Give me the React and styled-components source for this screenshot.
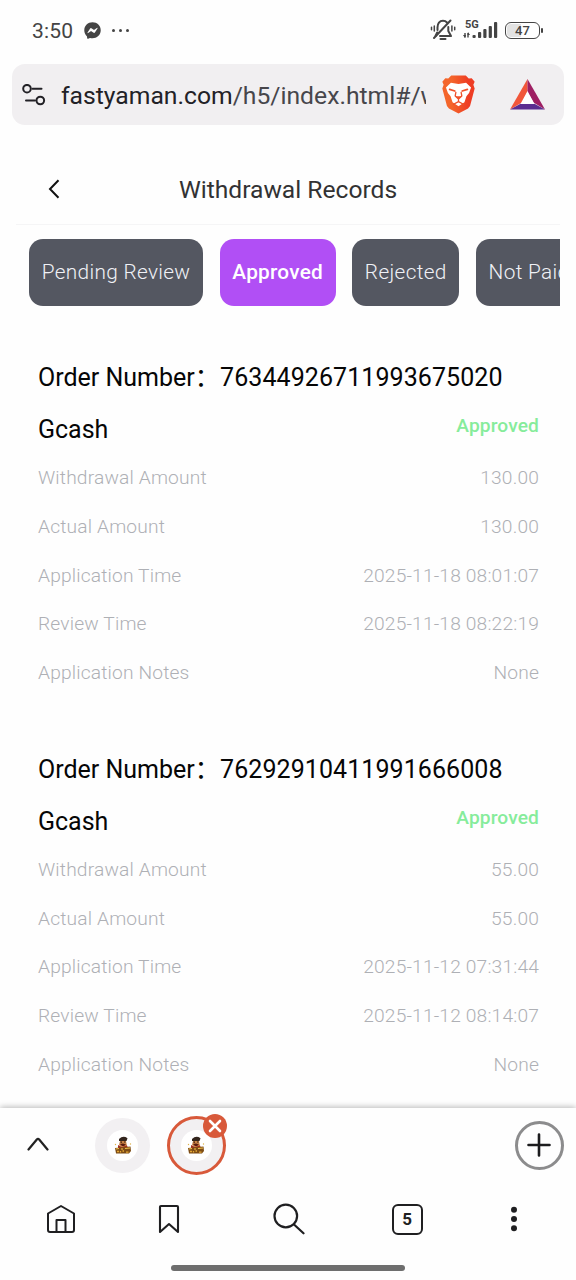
import React from 'react';
import styled, { createGlobalStyle } from 'styled-components';
import { FaFacebookMessenger } from 'react-icons/fa';

const GlobalStyle = createGlobalStyle`
    *{
        box-sizing:border-box;
    }
    body{
        margin:0;
        background:#fefefe;
        font-family:Roboto, "Noto Sans CJK SC", sans-serif;
    }
    button{
        padding:0;
        border:0;
        background:none;
        font:inherit;
    }
    svg{
        display:block;
    }
`;

const tabs = ['Pending Review', 'Approved', 'Rejected', 'Not Paid'];

const orders = [
    {
        number: '76344926711993675020',
        channel: 'Gcash',
        status: 'Approved',
        rows: [
            ['Withdrawal Amount', '130.00'],
            ['Actual Amount', '130.00'],
            ['Application Time', '2025-11-18 08:01:07'],
            ['Review Time', '2025-11-18 08:22:19'],
            ['Application Notes', 'None'],
        ],
    },
    {
        number: '76292910411991666008',
        channel: 'Gcash',
        status: 'Approved',
        rows: [
            ['Withdrawal Amount', '55.00'],
            ['Actual Amount', '55.00'],
            ['Application Time', '2025-11-12 07:31:44'],
            ['Review Time', '2025-11-12 08:14:07'],
            ['Application Notes', 'None'],
        ],
    },
];

function MuteIcon() {
    return (
        <svg width="26" height="24" viewBox="0 0 26 24" fill="none" stroke="#444" strokeWidth="2" strokeLinecap="round" strokeLinejoin="round">
            <path d="M7.500 12V9.500C7.500 5.500 9.500 2.800 13 2.800C14.500 2.800 16 3.400 17 4.500" />
            <path d="M18.300 9V13L21 18H10" />
            <path d="M7.200 14.500L5.500 18" />
            <path d="M20.500 2.500L4 20" />
            <path d="M10.500 21H15.500" />
            <path d="M4.300 8V13M1.500 9.300V11.700M21.900 8V13M24.700 9.300V11.700" strokeWidth="1.500" />
        </svg>
    );
}

function SignalIcon() {
    return (
        <svg width="35" height="20" viewBox="0 0 35 20" fill="#444">
            <path d="M2 13V17.500M5 13V17.500" stroke="#444" strokeWidth="1.400" />
            <path d="M0 15H3L2 18ZM4.500 15H7L5 12Z" />
            <rect x="9.500" y="15" width="3.200" height="3" rx="1" />
            <rect x="15" y="12" width="3.200" height="6" rx="1" />
            <rect x="20.300" y="9" width="3.200" height="9" rx="1" />
            <rect x="25.700" y="6" width="3.200" height="12" rx="1" />
            <rect x="31" y="2" width="3.200" height="16" rx="1" />
        </svg>
    );
}

function SiteSettingsIcon() {
    return (
        <svg width="24" height="22" viewBox="0 0 24 22" fill="none" stroke="#222126" strokeWidth="2" strokeLinecap="round">
            <circle cx="5" cy="4.700" r="3.800" />
            <path d="M10.500 4.700H19.500M4 16.500H13" />
            <circle cx="18.300" cy="16.500" r="3.800" />
        </svg>
    );
}

function LionIcon() {
    return (
        <svg width="33" height="39" viewBox="0 0 100 117" strokeLinecap="round" strokeLinejoin="round">
            <defs>
                <linearGradient id="lion" x1="0" x2="1">
                    <stop offset=".3" stopColor="#f4652b" />
                    <stop offset=".8" stopColor="#ee3d24" />
                </linearGradient>
            </defs>
            <path d="M28 1H72L81 10L90 9L99 20L95 29L99 40L85 93L79 101L50 116L21 101L15 93L1 40L5 29L1 20L10 9L19 10Z" fill="url(#lion)" />
            <path d="M12 37L27 23L50 27L73 23L88 37L82 54L74 64L68 82L50 94L32 82L26 64L18 54Z" fill="#fff" />
            <path d="M23 43L39 48M77 43L61 48" stroke="#f0502a" strokeWidth="5" fill="none" />
            <path d="M42 52L40 63L50 72L60 63L58 52M50 73V80M35 88L50 80L65 88" stroke="#f0502a" strokeWidth="4" fill="none" />
            <path d="M41 64H59L50 73Z" fill="#f0502a" />
        </svg>
    );
}

function BatIcon() {
    return (
        <svg width="35" height="31" viewBox="0 0 35 31">
            <path d="M17.500 0L0 30.500L12 23.500L17.500 13Z" fill="#f1563a" />
            <path d="M17.500 0L35 30.500L23.500 23.500L17.500 13Z" fill="#9e1f63" />
            <path d="M0 30.500H35L24 24.500H11Z" fill="#5b2d90" />
            <path d="M17.500 12L24.500 25H10.500Z" fill="#fff" />
        </svg>
    );
}

function FavIcon() {
    return (
        <svg width="18" height="19" viewBox="0 0 18 19">
            <path d="M5 3Q9 -1 13.500 2.200L12.500 5H5Z" fill="#33251d" />
            <path d="M6 5H12L13 10L9 12L5 9Z" fill="#c98345" />
            <path d="M6.500 6.200H8M10 6H11.500" stroke="#3b1d10" strokeWidth="1.200" />
            <path d="M6 8L9 7.500L12 8.500L10 10H8Z" fill="#5a1c12" />
            <path d="M4 9L8 11L13 9.500L14 12H4Z" fill="#a62e1d" />
            <path d="M1 12L16.500 10.500L17 15L15 17.500H2Z" fill="#7d4c15" />
            <path d="M2 13L5 12.500M7 13H9M11 12.500L16 12" stroke="#f2c14d" strokeWidth="1.200" />
            <path d="M3 15.500H5M6.500 15V16.500M8.500 15H10M12 16.200H14.500" stroke="#e7a936" strokeWidth="1.300" />
            <circle cx="1.500" cy="8.500" r=".7" fill="#e0b34a" />
            <circle cx="16.500" cy="8" r=".7" fill="#e0b34a" />
        </svg>
    );
}

function App() {
    return (
        <Screen>
            <GlobalStyle />
            <StatusBar>
                <Clock>3:50</Clock>
                <FaFacebookMessenger size={17} color="#444" />
                <Dots><i /><i /><i /></Dots>
                <StatusRight>
                    <MuteIcon />
                    <Network>
                        <SignalIcon />
                        <NetworkType>5G</NetworkType>
                    </Network>
                    <Battery>47</Battery>
                </StatusRight>
            </StatusBar>
            <UrlBar>
                <SiteSettingsIcon />
                <Url>fastyaman.com<span>/h5/index.html#/w</span></Url>
                <BraveLogo><LionIcon /></BraveLogo>
                <BatIcon />
            </UrlBar>
            <Page>
                <PageHeader>
                    <BackButton aria-label="Back">
                        <svg width="12" height="20" viewBox="0 0 12 20" fill="none" stroke="#111" strokeWidth="2">
                            <path d="M10.500 1.200L2 10L10.500 18.800" />
                        </svg>
                    </BackButton>
                    <Title>Withdrawal Records</Title>
                </PageHeader>
                <TabList>
                    {tabs.map(tab => (
                        <Tab key={tab} $active={tab === 'Approved'}>{tab}</Tab>
                    ))}
                </TabList>
                {orders.map(order => (
                    <Order key={order.number}>
                        <OrderNumber><span>Order Number：</span><b>{order.number}</b></OrderNumber>
                        <OrderHead>
                            <Channel>{order.channel}</Channel>
                            <Status>{order.status}</Status>
                        </OrderHead>
                        {order.rows.map(([label, value]) => (
                            <Row key={label}>
                                <span>{label}</span>
                                <span>{value}</span>
                            </Row>
                        ))}
                    </Order>
                ))}
            </Page>
            <BottomBar>
                <TabStrip>
                    <svg width="22" height="16" viewBox="0 0 22 16" fill="none" stroke="#222" strokeWidth="2.200" strokeLinecap="round" strokeLinejoin="round">
                        <path d="M1.500 12.500L9.800 2.500Q11 1.200 12.200 2.500L20.500 12.500" />
                    </svg>
                    <SiteTab><SiteIcon><FavIcon /></SiteIcon></SiteTab>
                    <SiteTab $active>
                        <SiteIcon><FavIcon /></SiteIcon>
                        <CloseBadge>
                            <svg width="14" height="14" viewBox="0 0 14 14" stroke="#fff" strokeWidth="2.600" strokeLinecap="round">
                                <path d="M2 2L12 12M12 2L2 12" />
                            </svg>
                        </CloseBadge>
                    </SiteTab>
                    <AddButton aria-label="New tab">
                        <svg width="24" height="24" viewBox="0 0 24 24" stroke="#1c1c1e" strokeWidth="2.600" strokeLinecap="round">
                            <path d="M12 1.500V22.500M1.500 12H22.500" />
                        </svg>
                    </AddButton>
                </TabStrip>
                <NavBar>
                    <svg width="30" height="30" viewBox="0 0 30 30" fill="none" stroke="#1f1f21" strokeWidth="2" strokeLinejoin="round">
                        <path d="M2 9.500L15 2L28 9.500V26Q28 28 26 28H4Q2 28 2 26Z" />
                        <path d="M10.500 28V16H19.500V28" />
                    </svg>
                    <svg width="22" height="30" viewBox="0 0 22 30" fill="none" stroke="#1f1f21" strokeWidth="2.100" strokeLinejoin="round">
                        <path d="M2 3Q2 2 3 2H19Q20 2 20 3V28L11 20L2 28Z" />
                    </svg>
                    <svg width="32" height="32" viewBox="0 0 32 32" fill="none" stroke="#1f1f21" strokeWidth="2.200" strokeLinecap="round">
                        <circle cx="12.800" cy="13" r="11.300" />
                        <path d="M21 21.500L30.500 30.300" />
                    </svg>
                    <TabCount>5</TabCount>
                    <svg width="6" height="26" viewBox="0 0 6 26" fill="#1f1f21">
                        <circle cx="3" cy="3.800" r="3" />
                        <circle cx="3" cy="13" r="3" />
                        <circle cx="3" cy="22.200" r="3" />
                    </svg>
                </NavBar>
                <HomeIndicator />
            </BottomBar>
        </Screen>
    );
}
export default App;

const Screen = styled.div`
    display:flex;
    flex-direction:column;
    width:576px;
    height:1280px;
    overflow:hidden;
`;

const StatusBar = styled.div`
    display:flex;
    align-items:center;
    flex:0 0 64px;
    padding:0 36px 4px 32px;
    color:#444;
`;

const Clock = styled.div`
    width:52px;
    padding-top:1px;
    font-size:21px;
    letter-spacing:.2px;
`;

const Dots = styled.div`
    display:flex;
    gap:4px;
    margin-left:11px;
    i{
        width:3px;
        height:3px;
        border-radius:50%;
        background:#444;
    }
`;

const StatusRight = styled.div`
    display:flex;
    align-items:center;
    margin-left:auto;
`;

const Network = styled.div`
    position:relative;
    margin:0 7px 0 7px;
`;

const NetworkType = styled.span`
    position:absolute;
    left:2px;
    top:-1px;
    font-size:11px;
    line-height:11px;
    font-weight:700;
`;

const Battery = styled.div`
    position:relative;
    width:35px;
    height:17px;
    border:1.500px solid #444;
    border-radius:6px;
    background:linear-gradient(90deg, #e2e2e2 45%, transparent 45%) content-box;
    padding:1px;
    font-size:13px;
    line-height:13px;
    font-weight:500;
    text-align:center;
    &::after{
        content:'';
        position:absolute;
        right:-4px;
        top:5px;
        width:2px;
        height:5px;
        border-radius:1px;
        background:#444;
    }
`;

const UrlBar = styled.div`
    display:flex;
    align-items:center;
    flex:0 0 61px;
    margin:0 12px;
    padding:0 19px 0 10px;
    border-radius:13px;
    background:#f1eff1;
`;

const Url = styled.div`
    flex:0 0 365px;
    margin-left:15px;
    padding-top:2px;
    overflow:hidden;
    white-space:nowrap;
    font-size:24.700px;
    line-height:36px;
    color:#222126;
    span{
        color:#47464b;
    }
`;

const BraveLogo = styled.div`
    margin:0 auto 0 16px;
`;

const Page = styled.div`
    flex:1;
    min-height:0;
    margin:28px 16px 0;
    overflow:hidden;
`;

const PageHeader = styled.div`
    display:grid;
    grid-template-columns:60px 1fr 60px;
    align-items:center;
    height:72px;
    border-bottom:1px solid #f5f5f6;
`;

const BackButton = styled.button`
    padding:1px 0 0 32px;
`;

const Title = styled.h1`
    margin:0;
    padding-top:1px;
    text-align:center;
    font-size:24.600px;
    font-weight:400;
    color:#323233;
`;

const TabList = styled.div`
    display:flex;
    gap:16.500px;
    padding:14px 0 0 13px;
    overflow:hidden;
`;

const Tab = styled.button`
    flex:none;
    height:67px;
    padding:0 12.700px 2px;
    border-radius:14px;
    background:${props => (props.$active ? '#b14ff5' : '#545761')};
    color:${props => (props.$active ? '#fff' : '#f0f1f6')};
    font-size:20.800px;
    font-weight:${props => (props.$active ? 500 : 300)};
    letter-spacing:${props => (props.$active ? .24 : .33)}px;
`;

const Order = styled.section`
    height:391.500px;
    padding:46px 21px 0 22px;
`;

const OrderNumber = styled.div`
    display:flex;
    line-height:52px;
    font-size:25px;
    color:#060606;
    span{
        width:182px;
        white-space:nowrap;
    }
    b{
        font-weight:400;
        letter-spacing:.08px;
    }
`;

const OrderHead = styled.div`
    display:flex;
    justify-content:space-between;
    height:50.300px;
`;

const Channel = styled.div`
    line-height:52px;
    font-size:25px;
    color:#060606;
`;

const Status = styled.div`
    line-height:44px;
    font-size:19.200px;
    font-weight:500;
    letter-spacing:.1px;
    color:#86ec9b;
`;

const Row = styled.div`
    display:flex;
    justify-content:space-between;
    line-height:48.700px;
    font-size:19.200px;
    font-weight:300;
    letter-spacing:.16px;
    color:#aeb0b5;
`;

const BottomBar = styled.div`
    position:relative;
    flex:0 0 172px;
    background:#fefefe;
    box-shadow:0 -1px 6px rgba(0,0,0,.28);
`;

const TabStrip = styled.div`
    display:flex;
    align-items:center;
    height:74px;
    padding:0 12.500px 0 27px;
`;

const SiteTab = styled.div`
    position:relative;
    display:flex;
    align-items:center;
    justify-content:center;
    width:${props => (props.$active ? 59 : 55)}px;
    height:${props => (props.$active ? 59 : 55)}px;
    margin-left:${props => (props.$active ? 16.5 : 46)}px;
    border:${props => (props.$active ? '3px solid #d8593a' : '0')};
    border-radius:50%;
    background:#f2f0f2;
`;

const SiteIcon = styled.div`
    display:flex;
    align-items:center;
    justify-content:center;
    width:31px;
    height:31px;
    border-radius:50%;
    background:#fff;
`;

const CloseBadge = styled.div`
    position:absolute;
    right:-4px;
    top:-5px;
    display:flex;
    align-items:center;
    justify-content:center;
    width:24px;
    height:24px;
    border-radius:50%;
    background:#d8593a;
`;

const AddButton = styled.button`
    display:flex;
    align-items:center;
    justify-content:center;
    width:49px;
    height:49px;
    margin-left:auto;
    border:3px solid #8c8c8d;
    border-radius:50%;
`;

const NavBar = styled.div`
    display:grid;
    grid-template-columns:122.500px 92px 148px 89.500px 124px;
    justify-items:center;
    align-items:center;
    height:74px;
`;

const TabCount = styled.div`
    width:31px;
    height:31px;
    border:2px solid #1f1f21;
    border-radius:6px;
    text-align:center;
    font-size:17px;
    line-height:27px;
    font-weight:700;
    color:#1f1f21;
`;

const HomeIndicator = styled.div`
    width:234px;
    height:6px;
    margin:9px auto 0;
    border-radius:3px;
    background:#6e6e6e;
`;
